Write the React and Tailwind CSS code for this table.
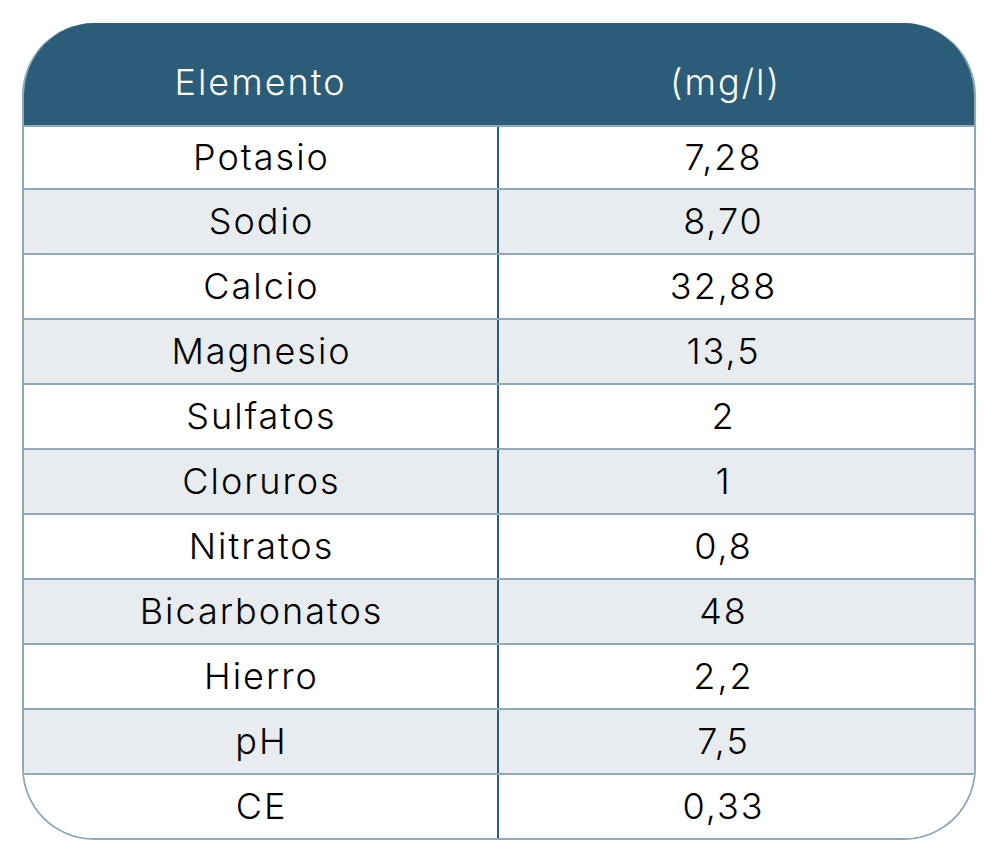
const rows = [
  ['Potasio', '7,28'],
  ['Sodio', '8,70'],
  ['Calcio', '32,88'],
  ['Magnesio', '13,5'],
  ['Sulfatos', '2'],
  ['Cloruros', '1'],
  ['Nitratos', '0,8'],
  ['Bicarbonatos', '48'],
  ['Hierro', '2,2'],
  ['pH', '7,5'],
  ['CE', '0,33'],
];

export default function App() {
  return (
    <div className="w-[1000px] h-[852px] bg-white pt-[23px] pl-[22px]" style={{ fontFamily: 'Inter, "Open Sans", sans-serif' }}>
      <div className="w-[954px] rounded-[72px] overflow-hidden border-2 border-t-0 border-[#8fa9b9] bg-white">
        {/* Header */}
        <div className="grid grid-cols-2 h-[102px] bg-[#2c5d78] text-white text-[36px] font-light tracking-[2px] -mx-[2px]">
          <div className="flex items-center justify-center pt-[16px]">Elemento</div>
          <div className="flex items-center justify-center pt-[16px] pr-[24px]">(mg/l)</div>
        </div>

        {/* Body */}
        {rows.map(([name, value], i) => (
          <div
            key={name}
            className={`grid grid-cols-2 border-t-2 border-[#8fa9b9] text-black text-[36px] font-light tracking-[2px] ${i === 0 ? 'h-[63px]' : 'h-[65px]'} ${i % 2 === 1 ? 'bg-[#e8ecef]' : 'bg-white'}`}
          >
            <div className="flex items-center justify-center border-r-2 border-[#2b5e7a] pb-[2px] pl-[2px]">{name}</div>
            <div className="flex items-center justify-center pr-[26px] pb-[2px]">{value}</div>
          </div>
        ))}
      </div>
    </div>
  );
}
